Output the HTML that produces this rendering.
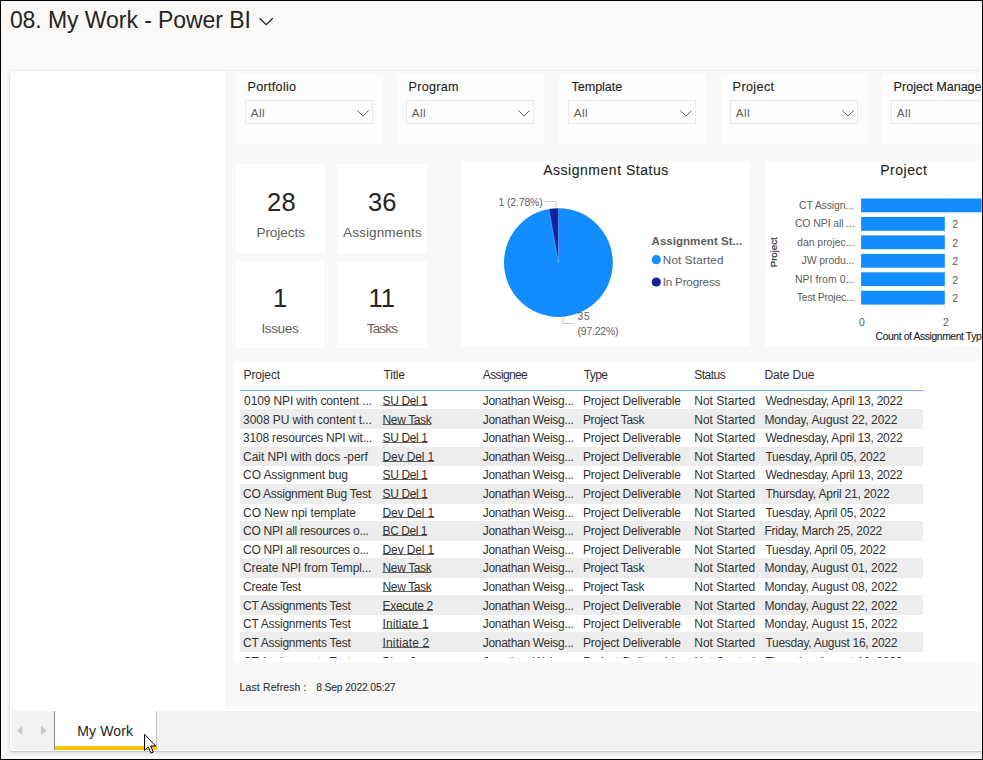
<!DOCTYPE html>
<html lang="en"><head><meta charset="utf-8"><title>08. My Work - Power BI</title>
<style>
*{box-sizing:border-box;margin:0;padding:0}
html,body{width:983px;height:760px;overflow:hidden;background:#faf9f8}
body{font-family:'Liberation Sans',sans-serif;color:#252423}
#frame{position:absolute;left:0;top:0;width:983px;height:760px;overflow:hidden;background:#000}
#win{left:1px;top:1px;width:981px;height:758px;border:1px solid rgba(255,255,255,.4)}
#view{left:1px;top:1px;width:981px;height:758px;background:#faf9f8;overflow:hidden}
#org{left:-1px;top:-1px;width:983px;height:760px}
#frame div,#frame span,#frame svg{position:absolute}
.t{white-space:nowrap;line-height:16px;color:#252423}
#panel{left:10px;top:71px;width:990px;height:680px;background:#fff;border-radius:2px;box-shadow:0 2px 4.5px rgba(0,0,0,.15),0 .3px .9px rgba(0,0,0,.07),0 0 0 1px rgba(0,0,0,.025)}
#dash{left:225px;top:71px;width:760px;height:638px;background:#f8f8f8;overflow:hidden}
#tabbar{left:11px;top:711px;width:975px;height:39px;background:#f3f2f1;border-radius:0 0 0 2px}
.slicer{background:#fcfcfc;top:3px;width:147px;height:71px}
.dd{left:9px;top:26px;width:128px;height:24px;border:1px solid #ebebeb;background:#fdfdfd}
.kpi,.vis{background:#fff}
#tbl{left:9px;top:290px;width:751px;height:302px;background:#fff}
#tbl .t{color:#323130}
#rows{left:6px;top:30px;width:683px;height:267px;overflow:hidden}
.r{left:0;width:683px;height:18.575px}
.g i{position:absolute;left:0;top:-0.7px;width:683px;height:19.8px;background:#ededed}
.g b{position:absolute;top:-0.7px;width:1px;height:19.8px;background:#f1f1f1}
.d{-webkit-text-stroke:.12px currentColor}
.u{text-decoration:underline;text-decoration-thickness:1px;text-underline-offset:0px;text-decoration-color:#605e5c;text-decoration-skip-ink:none}
#tab{left:43px;top:0;width:103px;height:39px;background:#fff;border-left:1px solid #8a8886;border-right:1px solid #c8c6c4}
#tab i{position:absolute;left:0;top:35px;width:102px;height:4px;background:#f2c811}
</style></head>
<body>
<div id="frame"><div id="view"><div id="org">
<span class="t" style="left:9.90px;top:12.00px;font-size:23px;letter-spacing:-0.067px">08. My Work - Power BI</span>
<svg style="left:258px;top:16px" width="17" height="12" viewBox="0 0 17 12"><path d="M1.6 2.2 L8.2 8.7 L14.8 2.2" fill="none" stroke="#252423" stroke-width="1.3"/></svg>
<div id="panel"></div>
<div id="dash">
<div class="slicer" style="left:11.0px">
<span class="t d" style="left:11.60px;top:5.00px;font-size:12.6px;letter-spacing:0.287px">Portfolio</span>
<div class="dd"></div>
<span class="t" style="left:14.80px;top:31.00px;font-size:11.7px;letter-spacing:0.400px;color:#605e5c">All</span>
<svg style="left:120px;top:35px" width="14" height="9" viewBox="0 0 14 9"><path d="M1.4 1.5 L7 7.1 L12.6 1.5" fill="none" stroke="#605e5c" stroke-width="1"/></svg>
</div>
<div class="slicer" style="left:172.0px">
<span class="t d" style="left:11.60px;top:5.00px;font-size:12.6px;letter-spacing:0.250px">Program</span>
<div class="dd"></div>
<span class="t" style="left:14.80px;top:31.00px;font-size:11.7px;letter-spacing:0.400px;color:#605e5c">All</span>
<svg style="left:120px;top:35px" width="14" height="9" viewBox="0 0 14 9"><path d="M1.4 1.5 L7 7.1 L12.6 1.5" fill="none" stroke="#605e5c" stroke-width="1"/></svg>
</div>
<div class="slicer" style="left:334.0px">
<span class="t d" style="left:12.60px;top:5.00px;font-size:12.6px;letter-spacing:-0.071px">Template</span>
<div class="dd"></div>
<span class="t" style="left:14.80px;top:31.00px;font-size:11.7px;letter-spacing:0.400px;color:#605e5c">All</span>
<svg style="left:120px;top:35px" width="14" height="9" viewBox="0 0 14 9"><path d="M1.4 1.5 L7 7.1 L12.6 1.5" fill="none" stroke="#605e5c" stroke-width="1"/></svg>
</div>
<div class="slicer" style="left:496.0px">
<span class="t d" style="left:11.60px;top:5.00px;font-size:12.6px;letter-spacing:0.383px">Project</span>
<div class="dd"></div>
<span class="t" style="left:14.80px;top:31.00px;font-size:11.7px;letter-spacing:0.400px;color:#605e5c">All</span>
<svg style="left:120px;top:35px" width="14" height="9" viewBox="0 0 14 9"><path d="M1.4 1.5 L7 7.1 L12.6 1.5" fill="none" stroke="#605e5c" stroke-width="1"/></svg>
</div>
<div class="slicer" style="left:657.0px">
<span class="t d" style="left:11.60px;top:5.00px;font-size:12.6px;letter-spacing:-0.014px">Project Manager</span>
<div class="dd"></div>
<span class="t" style="left:14.80px;top:31.00px;font-size:11.7px;letter-spacing:0.400px;color:#605e5c">All</span>
<svg style="left:120px;top:35px" width="14" height="9" viewBox="0 0 14 9"><path d="M1.4 1.5 L7 7.1 L12.6 1.5" fill="none" stroke="#605e5c" stroke-width="1"/></svg>
</div>
<div class="kpi" style="left:11.0px;top:93.4px;width:89px;height:88.4px">
<span class="t" style="left:31.10px;top:29.60px;font-size:25.5px;letter-spacing:0.200px">28</span>
<span class="t" style="left:20.40px;top:60.60px;font-size:13.6px;letter-spacing:-0.057px;color:#605e5c">Projects</span>
</div>
<div class="kpi" style="left:112.0px;top:93.4px;width:90px;height:88.4px">
<span class="t" style="left:31.05px;top:29.60px;font-size:25.5px;letter-spacing:-0.100px">36</span>
<span class="t" style="left:6.10px;top:60.60px;font-size:13.6px;letter-spacing:0.080px;color:#605e5c">Assignments</span>
</div>
<div class="kpi" style="left:11.0px;top:190.0px;width:88px;height:87.4px">
<span class="t" style="left:36.90px;top:29.00px;font-size:25.5px">1</span>
<span class="t" style="left:25.40px;top:60.00px;font-size:13.6px;letter-spacing:-0.400px;color:#605e5c">Issues</span>
</div>
<div class="kpi" style="left:112.0px;top:190.0px;width:90px;height:87.4px">
<span class="t" style="left:31.50px;top:29.00px;font-size:25.5px">11</span>
<span class="t" style="left:29.70px;top:60.00px;font-size:13.6px;letter-spacing:-0.850px;color:#605e5c">Tasks</span>
</div>
<div class="vis" style="left:236.4px;top:90px;width:287.4px;height:184.7px">
<span class="t d" style="left:81.80px;top:1.00px;font-size:14px;letter-spacing:0.525px">Assignment Status</span>
<svg style="left:0;top:0" width="288" height="185" viewBox="0 0 288 185"><circle cx="97.4" cy="101.6" r="54.4" fill="#118dff"/><path d="M97.4 101.6 L87.95 48.03 A54.4 54.4 0 0 1 97.4 47.2 Z" fill="#12239e" stroke="#fff" stroke-opacity=".45" stroke-width=".6"/><path d="M83.6 40.5 H95.1 V46.4" fill="none" stroke="#c8c6c4" stroke-width="1"/><path d="M102.1 156.5 V162.5 H113.2" fill="none" stroke="#c8c6c4" stroke-width="1"/><circle cx="195.3" cy="98.7" r="4.6" fill="#118dff"/><circle cx="195.3" cy="121.0" r="4.6" fill="#12239e"/></svg>
<span class="t" style="left:37.10px;top:34.00px;font-size:10.4px;letter-spacing:-0.112px;color:#605e5c">1 (2.78%)</span>
<span class="t" style="left:116.10px;top:148.00px;font-size:10.4px;letter-spacing:0.800px;color:#605e5c">35</span>
<span class="t" style="left:116.10px;top:163.00px;font-size:10.4px;letter-spacing:-0.171px;color:#605e5c">(97.22%)</span>
<span class="t" style="left:190.20px;top:72.00px;font-size:11.6px;letter-spacing:-0.020px;color:#605e5c;font-weight:700">Assignment St...</span>
<span class="t" style="left:201.40px;top:91.00px;font-size:11.7px;letter-spacing:0.160px;color:#605e5c">Not Started</span>
<span class="t" style="left:201.40px;top:113.00px;font-size:11.7px;letter-spacing:-0.220px;color:#605e5c">In Progress</span>
</div>
<div class="vis" style="left:540.2px;top:89.8px;width:278px;height:185px">
<span class="t d" style="left:114.95px;top:1.20px;font-size:14px;letter-spacing:0.550px">Project</span>
<svg style="left:0;top:0" width="278" height="185" viewBox="0 0 278 185"><path d="M96.0 33.7 V149.2" stroke="#d6d6d6" stroke-width="1" stroke-dasharray="1 3" fill="none"/><path d="M179.5 33.7 V149.2" stroke="#d6d6d6" stroke-width="1" stroke-dasharray="1 3" fill="none"/><path d="M263.0 33.7 V149.2" stroke="#d6d6d6" stroke-width="1" stroke-dasharray="1 3" fill="none"/><rect x="96.1" y="37.5" width="175.8" height="13.8" fill="#118dff"/><rect x="96.1" y="56.0" width="83.7" height="13.8" fill="#118dff"/><rect x="96.1" y="74.4" width="83.7" height="13.8" fill="#118dff"/><rect x="96.1" y="92.9" width="83.7" height="13.8" fill="#118dff"/><rect x="96.1" y="111.3" width="83.7" height="13.8" fill="#118dff"/><rect x="96.1" y="129.8" width="83.7" height="13.8" fill="#118dff"/></svg>
<span class="t" style="left:33.80px;top:36.20px;font-size:10.5px;letter-spacing:-0.127px;color:#605e5c">CT Assign...</span>
<span class="t" style="left:29.70px;top:54.20px;font-size:10.5px;letter-spacing:-0.100px;color:#605e5c">CO NPI all ...</span>
<span class="t" style="left:187.00px;top:56.20px;font-size:10.4px;color:#605e5c">2</span>
<span class="t" style="left:31.90px;top:73.20px;font-size:10.5px;letter-spacing:-0.042px;color:#605e5c">dan projec...</span>
<span class="t" style="left:187.00px;top:75.20px;font-size:10.4px;color:#605e5c">2</span>
<span class="t" style="left:36.40px;top:91.20px;font-size:10.5px;letter-spacing:-0.100px;color:#605e5c">JW produ...</span>
<span class="t" style="left:187.00px;top:93.20px;font-size:10.4px;color:#605e5c">2</span>
<span class="t" style="left:29.70px;top:110.20px;font-size:10.5px;letter-spacing:0.058px;color:#605e5c">NPI from 0...</span>
<span class="t" style="left:187.00px;top:112.20px;font-size:10.4px;color:#605e5c">2</span>
<span class="t" style="left:31.60px;top:128.20px;font-size:10.5px;letter-spacing:-0.246px;color:#605e5c">Test Projec...</span>
<span class="t" style="left:187.00px;top:130.20px;font-size:10.4px;color:#605e5c">2</span>
<span class="t" style="left:93.90px;top:154.20px;font-size:10.4px;color:#605e5c">0</span>
<span class="t" style="left:177.70px;top:154.20px;font-size:10.4px;color:#605e5c">2</span>
<span class="t d" style="left:110.40px;top:168.20px;font-size:10.3px;letter-spacing:-0.370px">Count of Assignment Type</span>
<div style="left:-11.9px;top:82.8px;width:40px;height:16px;transform:rotate(-90deg)"><span class="t d" style="left:4.70px;top:1.00px;font-size:9.8px;letter-spacing:-0.067px">Project</span></div>
</div>
<div id="tbl">
<span class="t" style="left:9.50px;top:6.00px;font-size:12px;letter-spacing:-0.117px">Project</span>
<span class="t" style="left:149.40px;top:6.00px;font-size:12px;letter-spacing:-0.150px">Title</span>
<span class="t" style="left:248.80px;top:6.00px;font-size:12px;letter-spacing:-0.629px">Assignee</span>
<span class="t" style="left:349.80px;top:6.00px;font-size:12px;letter-spacing:-0.633px">Type</span>
<span class="t" style="left:460.20px;top:6.00px;font-size:12px;letter-spacing:-0.500px">Status</span>
<span class="t" style="left:530.40px;top:6.00px;font-size:12px;letter-spacing:-0.100px">Date Due</span>
<div style="left:6px;top:29px;width:683px;height:1px;background:#5fb1ff"></div>
<div id="rows">
<div class="r" style="top:0.60px">
<span class="t" style="left:4.10px;top:1.40px;font-size:12px;letter-spacing:-0.121px">0109 NPI with content ...</span>
<span class="t u" style="left:142.60px;top:1.40px;font-size:12px;letter-spacing:-0.400px">SU Del 1</span>
<span class="t" style="left:242.80px;top:1.40px;font-size:12px;letter-spacing:-0.300px">Jonathan Weisg...</span>
<span class="t" style="left:342.90px;top:1.40px;font-size:12px;letter-spacing:-0.144px">Project Deliverable</span>
<span class="t" style="left:454.20px;top:1.40px;font-size:12px;letter-spacing:0.030px">Not Started</span>
<span class="t" style="left:525.40px;top:1.40px;font-size:12px;letter-spacing:-0.208px">Wednesday, April 13, 2022</span>
</div>
<div class="r g" style="top:19.18px"><i></i><b style="left:138px"></b><b style="left:237px"></b><b style="left:339px"></b><b style="left:450px"></b><b style="left:520px"></b>
<span class="t" style="left:3.10px;top:1.82px;font-size:12px;letter-spacing:-0.079px">3008 PU with content t...</span>
<span class="t u" style="left:142.60px;top:1.82px;font-size:12px;letter-spacing:-0.386px">New Task</span>
<span class="t" style="left:242.80px;top:1.82px;font-size:12px;letter-spacing:-0.300px">Jonathan Weisg...</span>
<span class="t" style="left:342.90px;top:1.82px;font-size:12px;letter-spacing:-0.327px">Project Task</span>
<span class="t" style="left:454.20px;top:1.82px;font-size:12px;letter-spacing:0.030px">Not Started</span>
<span class="t" style="left:524.40px;top:1.82px;font-size:12px;letter-spacing:-0.095px">Monday, August 22, 2022</span>
</div>
<div class="r" style="top:37.75px">
<span class="t" style="left:3.10px;top:1.25px;font-size:12px;letter-spacing:-0.204px">3108 resources NPI wit...</span>
<span class="t u" style="left:142.60px;top:1.25px;font-size:12px;letter-spacing:-0.400px">SU Del 1</span>
<span class="t" style="left:242.80px;top:1.25px;font-size:12px;letter-spacing:-0.300px">Jonathan Weisg...</span>
<span class="t" style="left:342.90px;top:1.25px;font-size:12px;letter-spacing:-0.144px">Project Deliverable</span>
<span class="t" style="left:454.20px;top:1.25px;font-size:12px;letter-spacing:0.030px">Not Started</span>
<span class="t" style="left:525.40px;top:1.25px;font-size:12px;letter-spacing:-0.208px">Wednesday, April 13, 2022</span>
</div>
<div class="r g" style="top:56.32px"><i></i><b style="left:138px"></b><b style="left:237px"></b><b style="left:339px"></b><b style="left:450px"></b><b style="left:520px"></b>
<span class="t" style="left:3.10px;top:1.68px;font-size:12px;letter-spacing:-0.057px">Cait NPI with docs -perf</span>
<span class="t u" style="left:142.60px;top:1.68px;font-size:12px;letter-spacing:-0.138px">Dev Del 1</span>
<span class="t" style="left:242.80px;top:1.68px;font-size:12px;letter-spacing:-0.300px">Jonathan Weisg...</span>
<span class="t" style="left:342.90px;top:1.68px;font-size:12px;letter-spacing:-0.144px">Project Deliverable</span>
<span class="t" style="left:454.20px;top:1.68px;font-size:12px;letter-spacing:0.030px">Not Started</span>
<span class="t" style="left:525.40px;top:1.68px;font-size:12px;letter-spacing:-0.205px">Tuesday, April 05, 2022</span>
</div>
<div class="r" style="top:74.90px">
<span class="t" style="left:3.10px;top:1.10px;font-size:12px;letter-spacing:-0.119px">CO Assignment bug</span>
<span class="t u" style="left:142.60px;top:1.10px;font-size:12px;letter-spacing:-0.400px">SU Del 1</span>
<span class="t" style="left:242.80px;top:1.10px;font-size:12px;letter-spacing:-0.300px">Jonathan Weisg...</span>
<span class="t" style="left:342.90px;top:1.10px;font-size:12px;letter-spacing:-0.144px">Project Deliverable</span>
<span class="t" style="left:454.20px;top:1.10px;font-size:12px;letter-spacing:0.030px">Not Started</span>
<span class="t" style="left:525.40px;top:1.10px;font-size:12px;letter-spacing:-0.208px">Wednesday, April 13, 2022</span>
</div>
<div class="r g" style="top:93.47px"><i></i><b style="left:138px"></b><b style="left:237px"></b><b style="left:339px"></b><b style="left:450px"></b><b style="left:520px"></b>
<span class="t" style="left:3.10px;top:1.52px;font-size:12px;letter-spacing:-0.252px">CO Assignment Bug Test</span>
<span class="t u" style="left:142.60px;top:1.52px;font-size:12px;letter-spacing:-0.400px">SU Del 1</span>
<span class="t" style="left:242.80px;top:1.52px;font-size:12px;letter-spacing:-0.300px">Jonathan Weisg...</span>
<span class="t" style="left:342.90px;top:1.52px;font-size:12px;letter-spacing:-0.144px">Project Deliverable</span>
<span class="t" style="left:454.20px;top:1.52px;font-size:12px;letter-spacing:0.030px">Not Started</span>
<span class="t" style="left:525.40px;top:1.52px;font-size:12px;letter-spacing:-0.213px">Thursday, April 21, 2022</span>
</div>
<div class="r" style="top:112.05px">
<span class="t" style="left:3.10px;top:1.95px;font-size:12px;letter-spacing:-0.061px">CO New npi template</span>
<span class="t u" style="left:142.60px;top:1.95px;font-size:12px;letter-spacing:-0.138px">Dev Del 1</span>
<span class="t" style="left:242.80px;top:1.95px;font-size:12px;letter-spacing:-0.300px">Jonathan Weisg...</span>
<span class="t" style="left:342.90px;top:1.95px;font-size:12px;letter-spacing:-0.144px">Project Deliverable</span>
<span class="t" style="left:454.20px;top:1.95px;font-size:12px;letter-spacing:0.030px">Not Started</span>
<span class="t" style="left:525.40px;top:1.95px;font-size:12px;letter-spacing:-0.205px">Tuesday, April 05, 2022</span>
</div>
<div class="r g" style="top:130.62px"><i></i><b style="left:138px"></b><b style="left:237px"></b><b style="left:339px"></b><b style="left:450px"></b><b style="left:520px"></b>
<span class="t" style="left:3.10px;top:1.38px;font-size:12px;letter-spacing:-0.288px">CO NPI all resources o...</span>
<span class="t u" style="left:142.60px;top:1.38px;font-size:12px;letter-spacing:-0.457px">BC Del 1</span>
<span class="t" style="left:242.80px;top:1.38px;font-size:12px;letter-spacing:-0.300px">Jonathan Weisg...</span>
<span class="t" style="left:342.90px;top:1.38px;font-size:12px;letter-spacing:-0.144px">Project Deliverable</span>
<span class="t" style="left:454.20px;top:1.38px;font-size:12px;letter-spacing:0.030px">Not Started</span>
<span class="t" style="left:524.40px;top:1.38px;font-size:12px;letter-spacing:-0.219px">Friday, March 25, 2022</span>
</div>
<div class="r" style="top:149.20px">
<span class="t" style="left:3.10px;top:1.80px;font-size:12px;letter-spacing:-0.288px">CO NPI all resources o...</span>
<span class="t u" style="left:142.60px;top:1.80px;font-size:12px;letter-spacing:-0.138px">Dev Del 1</span>
<span class="t" style="left:242.80px;top:1.80px;font-size:12px;letter-spacing:-0.300px">Jonathan Weisg...</span>
<span class="t" style="left:342.90px;top:1.80px;font-size:12px;letter-spacing:-0.144px">Project Deliverable</span>
<span class="t" style="left:454.20px;top:1.80px;font-size:12px;letter-spacing:0.030px">Not Started</span>
<span class="t" style="left:525.40px;top:1.80px;font-size:12px;letter-spacing:-0.205px">Tuesday, April 05, 2022</span>
</div>
<div class="r g" style="top:167.77px"><i></i><b style="left:138px"></b><b style="left:237px"></b><b style="left:339px"></b><b style="left:450px"></b><b style="left:520px"></b>
<span class="t" style="left:3.10px;top:1.23px;font-size:12px;letter-spacing:-0.152px">Create NPI from Templ...</span>
<span class="t u" style="left:142.60px;top:1.23px;font-size:12px;letter-spacing:-0.386px">New Task</span>
<span class="t" style="left:242.80px;top:1.23px;font-size:12px;letter-spacing:-0.300px">Jonathan Weisg...</span>
<span class="t" style="left:342.90px;top:1.23px;font-size:12px;letter-spacing:-0.327px">Project Task</span>
<span class="t" style="left:454.20px;top:1.23px;font-size:12px;letter-spacing:0.030px">Not Started</span>
<span class="t" style="left:524.40px;top:1.23px;font-size:12px;letter-spacing:-0.095px">Monday, August 01, 2022</span>
</div>
<div class="r" style="top:186.35px">
<span class="t" style="left:3.10px;top:1.65px;font-size:12px;letter-spacing:-0.310px">Create Test</span>
<span class="t u" style="left:142.60px;top:1.65px;font-size:12px;letter-spacing:-0.386px">New Task</span>
<span class="t" style="left:242.80px;top:1.65px;font-size:12px;letter-spacing:-0.300px">Jonathan Weisg...</span>
<span class="t" style="left:342.90px;top:1.65px;font-size:12px;letter-spacing:-0.327px">Project Task</span>
<span class="t" style="left:454.20px;top:1.65px;font-size:12px;letter-spacing:0.030px">Not Started</span>
<span class="t" style="left:524.40px;top:1.65px;font-size:12px;letter-spacing:-0.095px">Monday, August 08, 2022</span>
</div>
<div class="r g" style="top:204.92px"><i></i><b style="left:138px"></b><b style="left:237px"></b><b style="left:339px"></b><b style="left:450px"></b><b style="left:520px"></b>
<span class="t" style="left:3.10px;top:2.08px;font-size:12px;letter-spacing:-0.256px">CT Assignments Test</span>
<span class="t u" style="left:142.60px;top:2.08px;font-size:12px;letter-spacing:-0.338px">Execute 2</span>
<span class="t" style="left:242.80px;top:2.08px;font-size:12px;letter-spacing:-0.300px">Jonathan Weisg...</span>
<span class="t" style="left:342.90px;top:2.08px;font-size:12px;letter-spacing:-0.144px">Project Deliverable</span>
<span class="t" style="left:454.20px;top:2.08px;font-size:12px;letter-spacing:0.030px">Not Started</span>
<span class="t" style="left:524.40px;top:2.08px;font-size:12px;letter-spacing:-0.095px">Monday, August 22, 2022</span>
</div>
<div class="r" style="top:223.50px">
<span class="t" style="left:3.10px;top:1.50px;font-size:12px;letter-spacing:-0.256px">CT Assignments Test</span>
<span class="t u" style="left:142.60px;top:1.50px;font-size:12px;letter-spacing:0.067px">Initiate 1</span>
<span class="t" style="left:242.80px;top:1.50px;font-size:12px;letter-spacing:-0.300px">Jonathan Weisg...</span>
<span class="t" style="left:342.90px;top:1.50px;font-size:12px;letter-spacing:-0.144px">Project Deliverable</span>
<span class="t" style="left:454.20px;top:1.50px;font-size:12px;letter-spacing:0.030px">Not Started</span>
<span class="t" style="left:524.40px;top:1.50px;font-size:12px;letter-spacing:-0.095px">Monday, August 15, 2022</span>
</div>
<div class="r g" style="top:242.07px"><i></i><b style="left:138px"></b><b style="left:237px"></b><b style="left:339px"></b><b style="left:450px"></b><b style="left:520px"></b>
<span class="t" style="left:3.10px;top:1.92px;font-size:12px;letter-spacing:-0.256px">CT Assignments Test</span>
<span class="t u" style="left:142.60px;top:1.92px;font-size:12px;letter-spacing:0.133px">Initiate 2</span>
<span class="t" style="left:242.80px;top:1.92px;font-size:12px;letter-spacing:-0.300px">Jonathan Weisg...</span>
<span class="t" style="left:342.90px;top:1.92px;font-size:12px;letter-spacing:-0.144px">Project Deliverable</span>
<span class="t" style="left:454.20px;top:1.92px;font-size:12px;letter-spacing:0.030px">Not Started</span>
<span class="t" style="left:525.40px;top:1.92px;font-size:12px;letter-spacing:-0.265px">Tuesday, August 16, 2022</span>
</div>
<div class="r" style="top:260.65px">
<span class="t" style="left:3.10px;top:2.35px;font-size:12px;letter-spacing:-0.256px">CT Assignments Test</span>
<span class="t u" style="left:142.60px;top:2.35px;font-size:12px">Plan 2</span>
<span class="t" style="left:242.80px;top:2.35px;font-size:12px;letter-spacing:-0.300px">Jonathan Weisg...</span>
<span class="t" style="left:342.90px;top:2.35px;font-size:12px;letter-spacing:-0.144px">Project Deliverable</span>
<span class="t" style="left:454.20px;top:2.35px;font-size:12px;letter-spacing:0.030px">Not Started</span>
<span class="t" style="left:525.40px;top:2.35px;font-size:12px;letter-spacing:-0.233px">Thursday, August 18, 2022</span>
</div>
</div></div>
<span class="t d" style="left:14.60px;top:609.00px;font-size:10.4px;letter-spacing:0.169px;color:#333">Last Refresh :</span>
<span class="t d" style="left:91.20px;top:609.00px;font-size:10.4px;letter-spacing:-0.173px;color:#333">8 Sep 2022 05:27</span>
</div>
<div id="tabbar">
<svg style="left:5px;top:14px" width="34" height="11" viewBox="0 0 34 11"><path d="M6.3 1 V10 L0.9 5.5 Z M25 1 V10 L30.9 5.5 Z" fill="#c8c8c8"/></svg>
<div id="tab"><i></i>
<span class="t" style="left:22.30px;top:12.00px;font-size:14px;letter-spacing:0.117px">My Work</span>
</div>
</div>
<svg style="left:143px;top:733px" width="14" height="22" viewBox="0 0 14 22"><path d="M1.5 1.3 V17.3 L5.2 13.9 L8 20.1 L10.3 19.1 L7.6 13 H12.7 Z" fill="#fff" stroke="#000" stroke-width="1" stroke-linejoin="miter"/></svg>
</div></div><div id="win"></div></div>
</body></html>
